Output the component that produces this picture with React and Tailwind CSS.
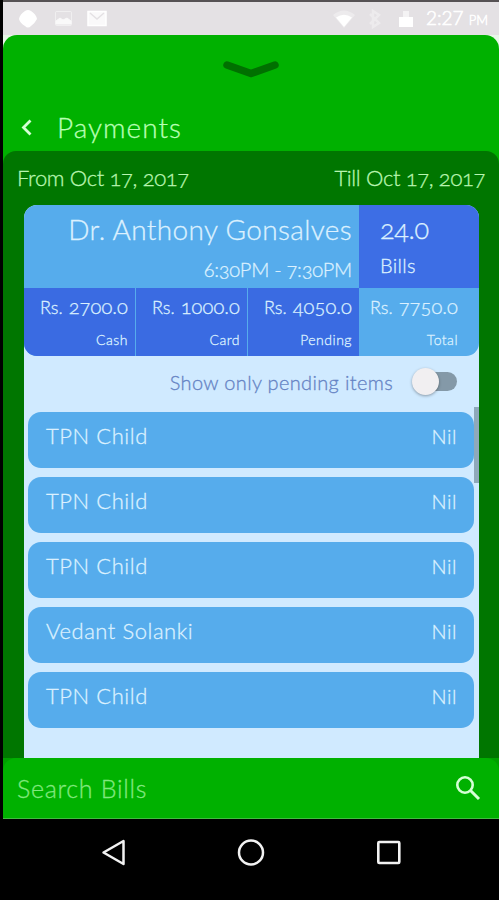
const summary = [
  { amount: "2700.0", label: "Cash" },
  { amount: "1000.0", label: "Card" },
  { amount: "4050.0", label: "Pending" },
];

const bills = ["TPN Child", "TPN Child", "TPN Child", "Vedant Solanki", "TPN Child"];

function StatusBar() {
  return (
    <div className="flex h-[35px] items-center border-t-2 border-[#565254] bg-[#e4e1e4] pr-[11px] pl-4 text-white">
      <svg className="h-5 w-[18px]" viewBox="0 0 18 20" fill="currentColor">
        <path d="M6 2Q9 0 12 2Q17 5 18 10Q16 14 12 17Q9 20 6 17Q1 14 0 10Q1 5 6 2Z" />
      </svg>
      <svg className="ml-[17px] h-5 w-[19px] opacity-80" viewBox="0 0 19 20" fill="none" stroke="currentColor">
        <rect x="1.500" y="2.500" width="16" height="14" rx="1" opacity=".6" />
        <path d="M2 15V12l4-3 3 2 4-2 4 3v3z" fill="currentColor" />
      </svg>
      <svg className="ml-[14px] h-5 w-5" viewBox="0 0 20 20" fill="none" stroke="currentColor">
        <rect x="1" y="2.500" width="18" height="14" fill="currentColor" fillOpacity=".8" strokeWidth="1.500" />
        <path d="M3 4l7 6 7-6" stroke="#e4e1e4" strokeWidth="1.500" />
      </svg>
      <svg className="ml-auto h-5 w-[22px]" viewBox="0 0 22 20" fill="currentColor">
        <path d="M0 6Q11-3 22 6L11 19Z" opacity=".35" />
        <path d="M3 8.500Q11 3 19 8.500L11 18Z" />
      </svg>
      <svg className="ml-3 h-5 w-[14px] opacity-35" viewBox="0 0 14 20" fill="none" stroke="currentColor" strokeWidth="2.500">
        <path d="M3 5l9 9-6 4V2l6 4-9 9" />
      </svg>
      <svg className="ml-[18px] h-5 w-[14px]" viewBox="0 0 14 20" fill="currentColor">
        <path d="M4 2h6v6H4z" opacity=".6" />
        <path d="M0 8h14v10H0z" />
      </svg>
      <div className="ml-[13px] flex w-[62px] items-baseline justify-between whitespace-nowrap">
        <span className="text-[19px] leading-6 [-webkit-text-stroke:0.6px]">2:27</span>
        <span className="text-[13px] leading-6 [-webkit-text-stroke:0.5px]">PM</span>
      </div>
    </div>
  );
}

function Header() {
  return (
    <div className="bg-[#e9f7e9]">
      <header className="flex h-[116px] flex-col rounded-t-[14px] bg-[#00b100]">
        <svg className="mt-[25px] ml-[219px] h-[18px] w-[58px]" viewBox="0 0 58 18" fill="none" stroke="#007000" strokeWidth="7.500" strokeLinecap="round" strokeLinejoin="round">
          <path d="M5 5L29 13.500L53 5" />
        </svg>
        <div className="mt-[29px] flex h-[40px] items-center">
          <svg className="ml-[18px] h-[18px] w-3" viewBox="0 0 12 18" fill="none" stroke="#d5ffd5" strokeWidth="2.800">
            <path d="M9.500 2.500L2.500 9.500L9.500 16.500" />
          </svg>
          <h1 className="ml-[24px] text-[28px] font-light tracking-[1px] text-[#b8ffb5]">Payments</h1>
        </div>
      </header>
    </div>
  );
}

function SummaryCard() {
  return (
    <section className="flex h-[151px] flex-col overflow-hidden rounded-[13px] bg-[#56acec] text-[#dcf1ff]">
      <div className="flex h-[83px]">
        <div className="flex w-[335px] flex-col items-end pr-[7px]">
          <h2 className="mt-[6px] text-[28px] leading-9 font-light tracking-[0.35px] whitespace-nowrap">Dr. Anthony Gonsalves</h2>
          <p className="mt-[10px] text-[20px] leading-6 tracking-[-0.25px] oldstyle-nums">6:30PM - 7:30PM</p>
        </div>
        <div className="flex flex-1 flex-col bg-[#3d6ee5] pl-[21px]">
          <span className="mt-[8px] text-[27px] leading-8 tracking-[-0.3px] oldstyle-nums">24.0</span>
          <span className="mt-[8px] text-[20px] leading-6 tracking-[0.3px]">Bills</span>
        </div>
      </div>
      <div className="flex h-[68px]">
        {summary.map(({ amount, label }) => (
          <div key={label} className="flex w-28 flex-col items-end border-r border-[#56acec] bg-[#3a6be2] pr-[7px] last:border-0">
            <Amount amount={amount} label={label} />
          </div>
        ))}
        <div className="flex flex-1 flex-col items-end pr-[21px]">
          <Amount amount="7750.0" label="Total" />
        </div>
      </div>
    </section>
  );
}

function Amount({ amount, label }) {
  return (
    <>
      <div className="mt-[6px] flex w-[88px] items-baseline justify-between leading-6">
        <span className="text-[18px]">Rs.</span>
        <span className="text-[20px] tracking-[0.1px] oldstyle-nums">{amount}</span>
      </div>
      <span className="mt-[11px] text-[14px] leading-5 tracking-[0.5px]">{label}</span>
    </>
  );
}

function BillList() {
  return (
    <div className="flex h-[350px] items-start">
      <ul className="mt-[5px] ml-1 flex w-[446px] flex-col gap-[9px]">
        {bills.map((name, i) => (
          <li key={i} className="flex h-14 justify-between rounded-[13px] bg-[#56acec] pr-[17px] pl-[18px] text-[#dcf1ff]">
            <span className="mt-[9px] text-[22px] leading-[30px] tracking-[0.55px]">{name}</span>
            <span className="mt-[9px] text-[20px] leading-[30px] tracking-[0.6px]">Nil</span>
          </li>
        ))}
      </ul>
      <div className="h-[76px] w-[5px] bg-[#8fa9bb]" />
    </div>
  );
}

function Search() {
  return (
    <div className="bg-[#00a000]">
      <div className="flex h-[61px] items-center rounded-t-[13px] border-b border-[#3fbd3f] bg-[#00b100] pr-[18px] pl-[14px]">
        <span className="mt-[2px] text-[25px] tracking-[0.7px] text-[#80e87e]">Search Bills</span>
        <svg className="ml-auto h-[26px] w-[26px]" viewBox="0 0 26 26" fill="none" stroke="#d5ffd5" strokeWidth="2.600">
          <circle cx="10" cy="10" r="7.700" />
          <path d="M15.500 15.500L24 24" strokeWidth="3" />
        </svg>
      </div>
    </div>
  );
}

function NavBar() {
  return (
    <nav className="flex h-[81px] items-start bg-black pt-5 pl-[98px]">
      <svg className="h-[28px] w-[26px]" viewBox="0 0 26 28" fill="none" stroke="#f2f2f2" strokeWidth="2.500" strokeLinejoin="round">
        <path d="M22.500 2V25L2.500 13.500Z" />
      </svg>
      <svg className="ml-[110px] h-[28px] w-[28px]" viewBox="0 0 28 28" fill="none" stroke="#f2f2f2" strokeWidth="2.500">
        <circle cx="14" cy="13.500" r="12" />
      </svg>
      <svg className="ml-[111px] h-[28px] w-[26px]" viewBox="0 0 26 28" fill="none" stroke="#f2f2f2" strokeWidth="2.600">
        <rect x="2.300" y="3" width="21" height="21" rx="1" />
      </svg>
    </nav>
  );
}

export default function App() {
  return (
    <div className="h-[900px] w-[499px] overflow-hidden bg-black pl-[3px] font-['Lato','Open_Sans',sans-serif] font-light [-webkit-text-stroke:0.3px]">
      <StatusBar />
      <Header />
      <div className="bg-[#00b100]">
        <main className="flex h-[607px] flex-col rounded-t-[13px] bg-[#007600]">
          <div className="flex h-[54px] items-center justify-between pr-[14px] pb-[2px] pl-[14px] text-[22px] tracking-[-0.35px] text-[#b8f5b0] oldstyle-nums">
            <span>From Oct 17, 2017</span>
            <span>Till Oct 17, 2017</span>
          </div>
          <div className="ml-[21px] flex w-[455px] flex-1 flex-col rounded-t-[13px] bg-[#d0eaff]">
            <SummaryCard />
            <div className="flex h-[51px] items-center justify-end pr-[22px]">
              <span className="text-[20px] tracking-[0.35px] text-[#6583c4]">Show only pending items</span>
              <div className="ml-[19px] flex h-[20px] w-[45px] items-center justify-end">
                <div className="flex h-[19px] w-[38px] items-center rounded-full bg-[#8499a8]">
                  <div className="-ml-[7px] h-[27px] w-[27px] shrink-0 rounded-full bg-[#f1eff1] shadow-[0_1px_3px_rgba(0,0,0,0.35)]" />
                </div>
              </div>
            </div>
            <BillList />
          </div>
        </main>
      </div>
      <Search />
      <NavBar />
    </div>
  );
}
